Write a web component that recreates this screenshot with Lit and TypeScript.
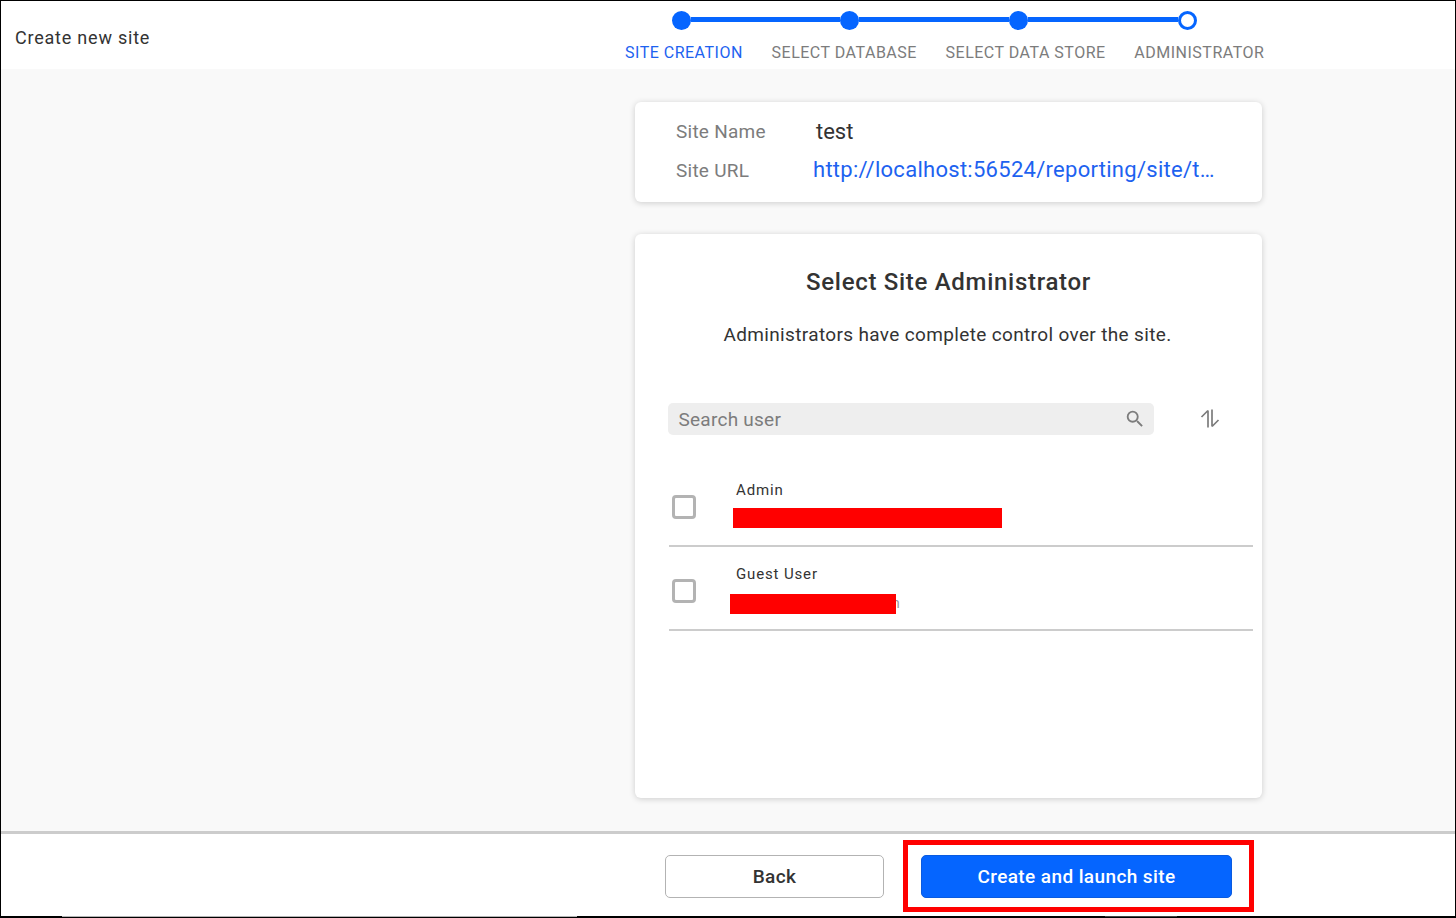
import { LitElement, html, css, svg } from "lit";
import { customElement } from "lit/decorators.js";

const steps = [
  { label: "SITE CREATION", active: true },
  { label: "SELECT DATABASE", active: false },
  { label: "SELECT DATA STORE", active: false },
  { label: "ADMINISTRATOR", active: false },
];

const users = [
  { name: "Admin", bar: 269, shift: -3, gap: 9, tail: false },
  { name: "Guest User", bar: 166, shift: -6, gap: 11, tail: true },
];

@customElement("app-root")
export class AppRoot extends LitElement {
  static styles = css`
    :host {
      display: block;
      width: 1456px;
      height: 918px;
      font-family: Roboto, "Liberation Sans", sans-serif;
      color: #333;
    }
    * { box-sizing: border-box; }
    .frame {
      position: relative;
      width: 1456px;
      height: 918px;
      border: solid #000;
      border-width: 1px 1px 2px 1px;
      display: flex;
      flex-direction: column;
      background: #fff;
    }
    .edge {
      position: absolute;
      bottom: -1px;
      height: 1px;
    }
    .edge.a { left: 61px; width: 515px; background: #b3b3b3; }
    .edge.b { left: 1104px; width: 72px; background: #444; }
    .header {
      height: 68px;
      flex: none;
      display: flex;
      background: #fff;
    }
    .title {
      width: 609px;
      padding: 26px 0 0 14px;
      font-size: 18px;
      line-height: 21px;
      letter-spacing: 0.78px;
      color: #333;
    }
    .stepper {
      padding-top: 10px;
      display: flex;
      flex-direction: column;
    }
    .track {
      display: flex;
      align-items: flex-start;
      height: 19px;
      margin-left: 62px;
    }
    .dot {
      width: 19px;
      height: 19px;
      border-radius: 50%;
      background: #0565ff;
      flex: none;
    }
    .dot.open {
      background: #fff;
      border: 3px solid #0565ff;
    }
    .line {
      width: 150px;
      height: 5px;
      margin-top: 6px;
      background: #0565ff;
      flex: none;
    }
    .dot:first-child + .line { width: 149px; }
    .labels {
      display: flex;
      gap: 28.7px;
      margin-top: 14px;
      margin-left: 15px;
      font-size: 16px;
      line-height: 18px;
      letter-spacing: 0.5px;
      color: #7c7c7c;
      white-space: nowrap;
    }
    .labels .on { color: #1d62f0; }
    .main {
      flex: 1;
      background: #f9f9f9;
      padding: 33px 0 0 634px;
      display: flex;
      flex-direction: column;
      gap: 32px;
      min-height: 0;
    }
    .card {
      width: 627px;
      background: #fff;
      border-radius: 6px;
      box-shadow: 0 1px 6px rgba(0, 0, 0, 0.18);
    }
    .info {
      height: 100px;
      padding: 10px 0 0 41px;
      display: grid;
      grid-template-columns: 138px 408px;
      grid-template-rows: 38px 41px;
      align-items: center;
    }
    .info .k {
      font-size: 19px;
      letter-spacing: 0.25px;
      color: #7c7c7c;
    }
    .info .v {
      font-size: 22px;
      color: #333;
      padding-left: 2px;
    }
    .info .url {
      font-size: 22px;
      letter-spacing: 0.28px;
      color: #1d62f0;
      white-space: nowrap;
      overflow: hidden;
      text-overflow: ellipsis;
      margin: 0 0 2px -1px;
    }
    .admin {
      height: 564px;
      padding: 33px 9px 0 33px;
      display: flex;
      flex-direction: column;
    }
    h2 {
      margin: 0;
      font-size: 24px;
      line-height: 30px;
      font-weight: 500;
      letter-spacing: 0.7px;
      text-align: center;
      color: #333;
      padding-right: 24px;
    }
    .sub {
      margin: 26px 0 0;
      font-size: 19px;
      line-height: 24px;
      letter-spacing: 0.35px;
      text-align: center;
      color: #333;
      padding-right: 26px;
    }
    .tools {
      display: flex;
      align-items: center;
      margin-top: 56px;
    }
    .search {
      width: 486px;
      height: 32px;
      background: #eee;
      border-radius: 5px;
      display: flex;
      align-items: center;
      justify-content: space-between;
      padding: 0 8px 0 10.5px;
      font-size: 19px;
      letter-spacing: 0.25px;
      color: #7c7c7c;
    }
    .sort {
      margin-left: 46px;
      display: flex;
    }
    .rows { margin-top: 28px; margin-left: 1px; }
    .row {
      width: 584px;
      height: 84px;
      border-bottom: 2px solid #ccc;
      display: flex;
      align-items: flex-start;
      flex: none;
    }
    .box {
      width: 24px;
      height: 24px;
      margin: 32px 0 0 3px;
      border: 3px solid #b3b3b3;
      border-radius: 4px;
      flex: none;
    }
    .person {
      position: relative;
      padding: 18px 0 0 40px;
      font-size: 15px;
      line-height: 18px;
      letter-spacing: 0.85px;
      color: #333;
    }
    .redact {
      position: relative;
      z-index: 1;
      height: 20px;
      background: #f00;
    }
    .tail {
      position: absolute;
      left: 196px;
      top: 47px;
      font-size: 14px;
      color: #9a9a9a;
    }
    .footer {
      height: 85px;
      flex: none;
      border-top: 3px solid #ccc;
      background: #fff;
      display: flex;
      align-items: flex-start;
      padding: 21px 0 0 664px;
    }
    button {
      font-family: inherit;
      font-size: 19px;
      font-weight: 500;
      letter-spacing: 0.4px;
      height: 43px;
      border-radius: 5px;
      cursor: pointer;
    }
    .back {
      width: 219px;
      background: #fff;
      border: 1px solid #b3b3b3;
      color: #333;
    }
    .outline {
      margin: -15px 0 0 19px;
      width: 351px;
      height: 72px;
      border: 5px solid #f00;
      padding: 10px 0 0 13px;
    }
    .primary {
      width: 311px;
      background: #0565ff;
      border: 1px solid #0a5be0;
      color: #fff;
      display: block;
    }
  `;

  private search() {
    return html`<svg width="22" height="22" viewBox="0 0 24 24" fill="#7c7c7c">
      ${svg`<path d="M15.5 14h-.79l-.28-.27A6.47 6.47 0 0 0 16 9.5 6.5 6.5 0 1 0 9.5 16c1.61 0 3.09-.59 4.23-1.57l.27.28v.79l5 4.99L20.49 19l-4.99-5zm-6 0C7.01 14 5 11.99 5 9.5S7.01 5 9.5 5 14 7.01 14 9.5 11.99 14 9.5 14z"/>`}
    </svg>`;
  }

  private sort() {
    return html`<svg width="20" height="20" viewBox="0 0 20 20" fill="none" stroke="#7c7c7c" stroke-width="1.7">
      ${svg`<path d="M8 18.5V1.5M8 1.5L1.5 8M12 .5v17M12 17.5L18.5 11"/>`}
    </svg>`;
  }

  render() {
    return html`<div class="frame">
      <div class="header">
        <div class="title">Create new site</div>
        <div class="stepper">
          <div class="track">
            <span class="dot"></span><span class="line"></span>
            <span class="dot"></span><span class="line"></span>
            <span class="dot"></span><span class="line"></span>
            <span class="dot open"></span>
          </div>
          <div class="labels">
            ${steps.map((s) => html`<span class=${s.active ? "on" : ""}>${s.label}</span>`)}
          </div>
        </div>
      </div>
      <div class="main">
        <div class="card info">
          <div class="k">Site Name</div>
          <div class="v">test</div>
          <div class="k">Site URL</div>
          <div class="url">http://localhost:56524/reporting/site/test</div>
        </div>
        <div class="card admin">
          <h2>Select Site Administrator</h2>
          <p class="sub">Administrators have complete control over the site.</p>
          <div class="tools">
            <div class="search"><span>Search user</span>${this.search()}</div>
            <div class="sort">${this.sort()}</div>
          </div>
          <div class="rows">
            ${users.map(
              (u) => html`<div class="row">
                <span class="box"></span>
                <div class="person">
                  <div>${u.name}</div>
                  <div class="redact" style="width:${u.bar}px;margin-left:${u.shift}px;margin-top:${u.gap}px"></div>
                  ${u.tail ? html`<span class="tail">n</span>` : ""}
                </div>
              </div>`
            )}
          </div>
        </div>
      </div>
      <div class="footer">
        <button class="back">Back</button>
        <div class="outline"><button class="primary">Create and launch site</button></div>
      </div>
      <span class="edge a"></span>
      <span class="edge b"></span>
    </div>`;
  }
}
